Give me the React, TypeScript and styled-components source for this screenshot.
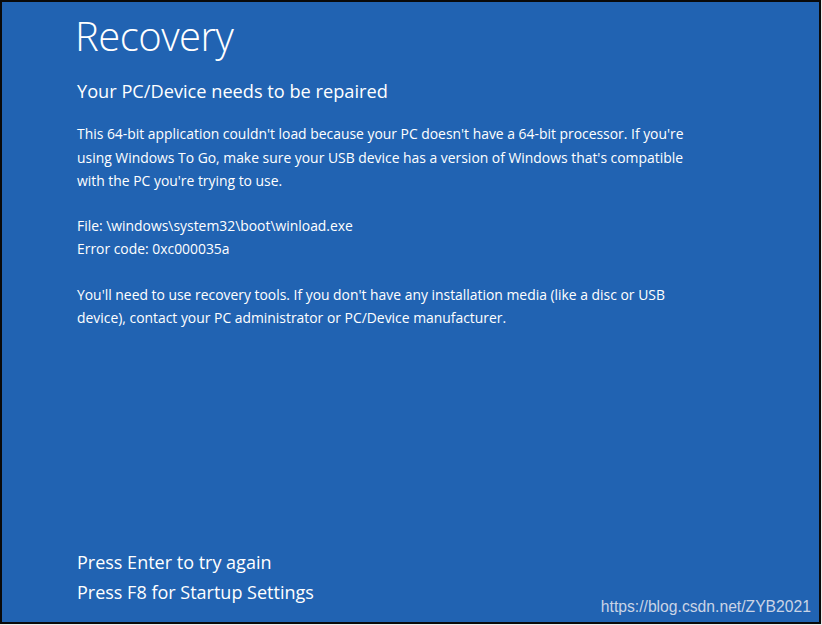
import styled, { createGlobalStyle } from "styled-components";

const GlobalStyle = createGlobalStyle`
  html, body {
    margin: 0;
    padding: 0;
    background: #ececec;
  }
`;

const Screen = styled.div`
  box-sizing: border-box;
  width: 821px;
  height: 624px;
  border: 2px solid #0a0a0a;
  background-color: #2163b2;
  color: #ffffff;
  font-family: "Open Sans", "Noto Sans", sans-serif;
  display: flex;
  flex-direction: column;
  justify-content: space-between;
  padding: 10px 0 15px 73px;
  position: relative;
`;

const Top = styled.div`
  display: flex;
  flex-direction: column;
`;

const Title = styled.h1`
  margin: 0;
  font-size: 40px;
  font-weight: 300;
  line-height: 48px;
  letter-spacing: -0.5px;
`;

const Subtitle = styled.h2`
  margin: 18px 0 0 2px;
  font-size: 18.2px;
  font-weight: 400;
  line-height: 26px;
`;

const Paragraph = styled.p<{ $gap?: number }>`
  margin: ${(p) => p.$gap ?? 20}px 0 0 2px;
  font-size: 13.9px;
  line-height: 23.5px;
  width: 612px;
`;

const Prompts = styled.div`
  display: flex;
  flex-direction: column;
  margin-left: 2px;
`;

const Prompt = styled.div`
  font-size: 18px;
  line-height: 30px;
`;

const Watermark = styled.span`
  position: absolute;
  right: 8px;
  bottom: 6px;
  font-family: "Liberation Sans", Arial, sans-serif;
  font-size: 15.7px;
  color: #c9d4e6;
`;

export default function App() {
  return (
    <>
      <GlobalStyle />
      <Screen>
        <Top>
          <Title>Recovery</Title>
          <Subtitle>Your PC/Device needs to be repaired</Subtitle>
          <Paragraph $gap={18}>
            This 64-bit application couldn't load because your PC doesn't have a
            64-bit processor. If you're using Windows To Go, make sure your USB
            device has a version of Windows that's compatible with the PC you're
            trying to use.
          </Paragraph>
          <Paragraph $gap={21}>
            File: \windows\system32\boot\winload.exe
            <br />
            Error code: 0xc000035a
          </Paragraph>
          <Paragraph $gap={22}>
            You'll need to use recovery tools. If you don't have any installation
            media (like a disc or USB device), contact your PC administrator or
            PC/Device manufacturer.
          </Paragraph>
        </Top>
        <Prompts>
          <Prompt>Press Enter to try again</Prompt>
          <Prompt>Press F8 for Startup Settings</Prompt>
        </Prompts>
        <Watermark>https://blog.csdn.net/ZYB2021</Watermark>
      </Screen>
    </>
  );
}
